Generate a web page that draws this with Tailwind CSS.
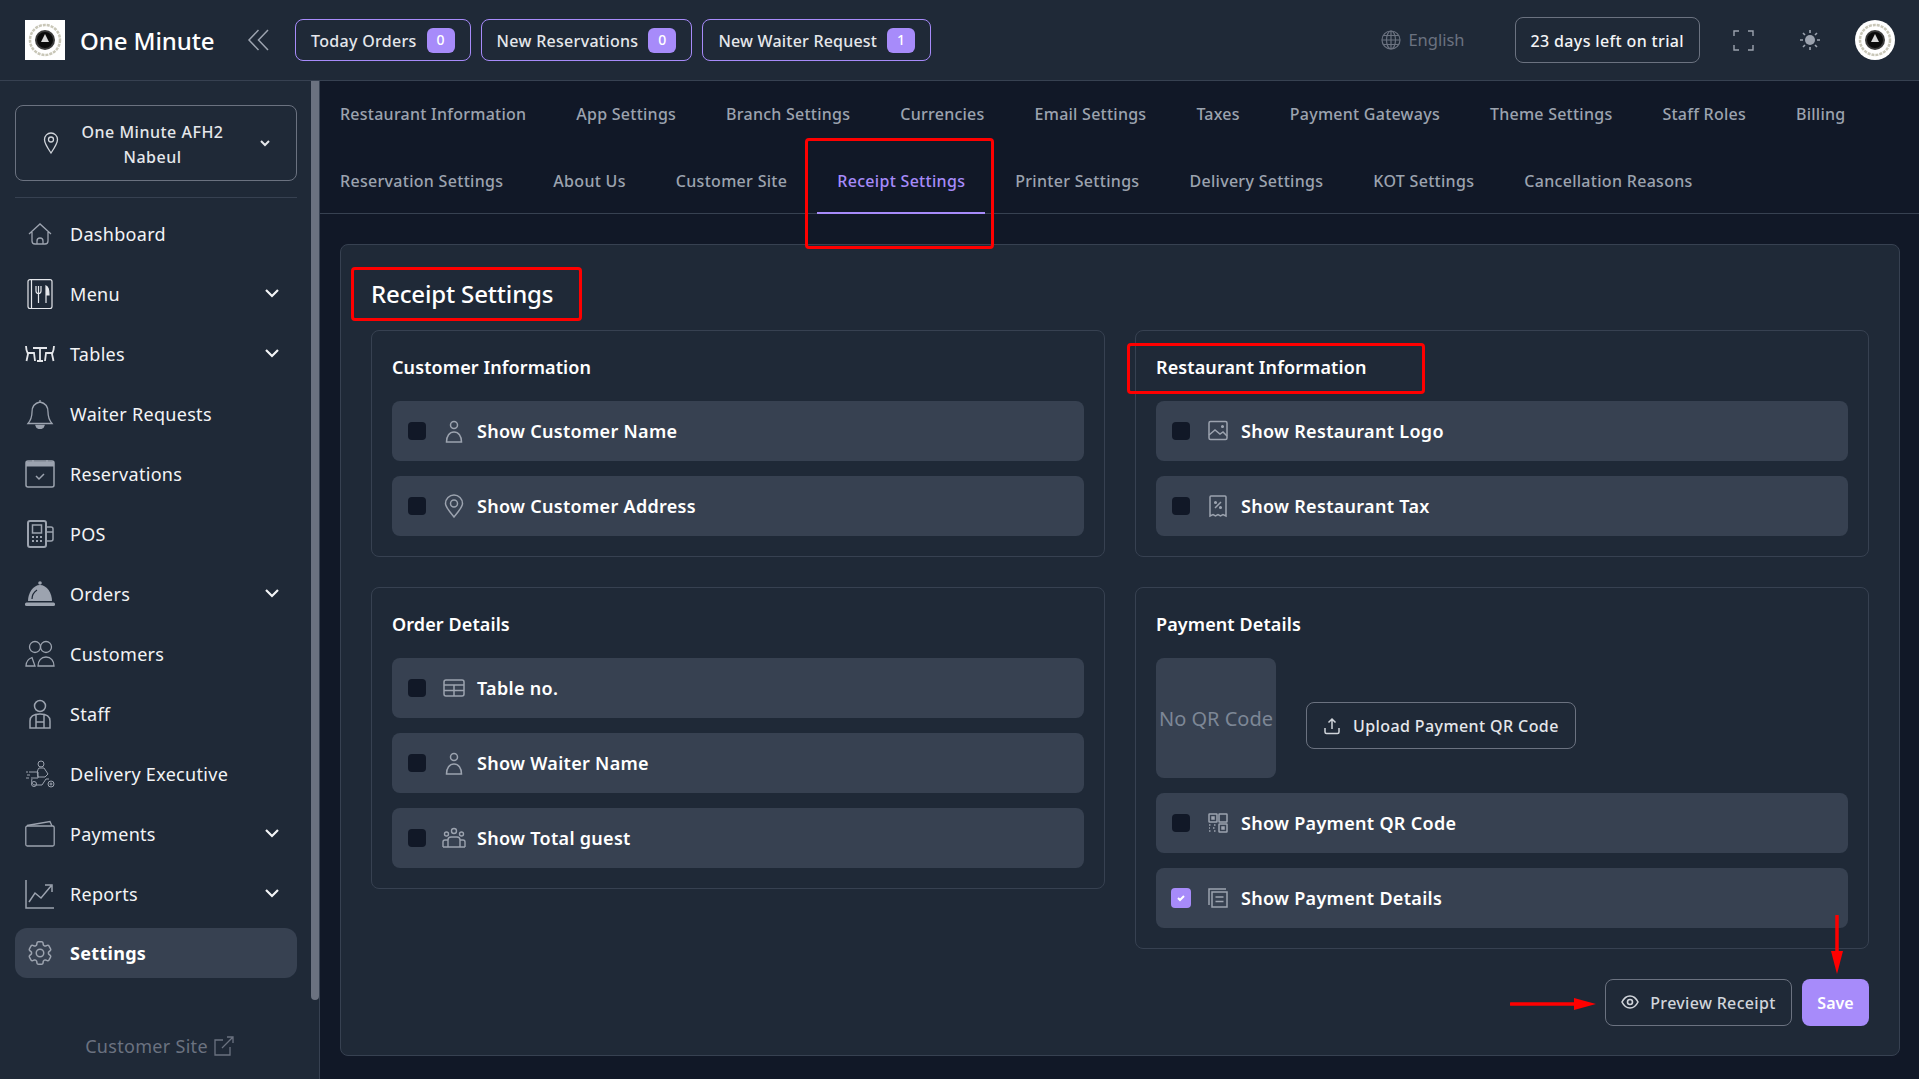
<!DOCTYPE html>
<html lang="en">
<head>
    <meta charset="UTF-8">
    <title>Receipt Settings - One Minute</title>
    <script src="https://cdn.jsdelivr.net/npm/@tailwindcss/browser@4"></script>
</head>
<body class="bg-[#111827] h-[1079px] overflow-hidden font-['Noto_Sans',sans-serif] text-white relative">

    <!-- Header -->
    <header class="h-[81px] bg-[#1f2937] border-b border-[#374151] flex items-center pl-[25px] pr-6">
        <svg class="w-10 h-10 shrink-0" viewBox="0 0 40 40"><rect width="40" height="40" fill="#fff"/><circle cx="20" cy="20" r="15" fill="none" stroke="#c9c7b8" stroke-width="2.500" stroke-dasharray="3 1"/><circle cx="20" cy="20" r="10" fill="#3b3b3b"/><circle cx="20" cy="20" r="8" fill="#0b0b0b"/><path d="M20 14l4 8h-8Z" fill="#d8d8d8"/></svg>
        <span class="ml-[15px] mt-0.5 text-2xl font-medium w-[134px] whitespace-nowrap tracking-[-0.1px]">One Minute</span>
        <svg class="ml-[33px] w-[24px] h-[24px] text-[#9ca3af]" fill="none" stroke="currentColor" stroke-width="1.5" viewBox="0 0 24 24"><path d="M11.5 2 2 12l9.5 10M21 2l-9.5 10L21 22"/></svg>
        <div class="ml-[24px] flex gap-2.5">
            <div class="h-[42px] pt-0.5 px-[15px] flex items-center gap-[10px] rounded-lg border border-[#a78bfa] text-[#e5e7eb] font-medium tracking-[0.3px]">Today Orders <span class="-mt-0.5 w-7 h-[25px] rounded-md bg-[#a78bfa] text-white text-sm flex items-center justify-center">0</span></div>
            <div class="h-[42px] pt-0.5 px-[15px] flex items-center gap-[10px] rounded-lg border border-[#a78bfa] text-[#e5e7eb] font-medium tracking-[0.3px]">New Reservations <span class="-mt-0.5 w-7 h-[25px] rounded-md bg-[#a78bfa] text-white text-sm flex items-center justify-center">0</span></div>
            <div class="h-[42px] pt-0.5 px-[15px] flex items-center gap-[10px] rounded-lg border border-[#a78bfa] text-[#e5e7eb] font-medium tracking-[0.2px]">New Waiter Request <span class="-mt-0.5 w-7 h-[25px] rounded-md bg-[#a78bfa] text-white text-sm flex items-center justify-center">1</span></div>
        </div>
        <div class="flex-1"></div>
        <svg class="w-5 h-5 text-[#6b7280]" fill="none" stroke="currentColor" stroke-width="1.2" viewBox="0 0 20 20"><circle cx="10" cy="10" r="9"/><ellipse cx="10" cy="10" rx="4.5" ry="9"/><path d="M10 1v18M1 10h18M2.2 5.5h15.6M2.2 14.5h15.6"/></svg>
        <span class="ml-[7px] text-[16.500px] text-[#6b7280]">English</span>
        <div class="ml-[50px] h-[46px] pt-0.5 px-[15px] flex items-center rounded-lg border border-[#6b7280] text-[#f3f4f6] font-medium tracking-[0.35px]">23 days left on trial</div>
        <svg class="ml-[33px] w-[21px] h-[21px] text-[#9ca3af]" fill="none" stroke="currentColor" stroke-width="1.4" viewBox="0 0 21 21"><path d="M1 6V1h5M15 1h5v5M20 15v5h-5M6 20H1v-5"/></svg>
        <svg class="ml-[45px] w-[22px] h-[22px] text-[#9ca3af]" fill="currentColor" viewBox="0 0 22 22"><circle cx="11" cy="11" r="5"/><path d="M11 1v3M11 18v3M1 11h3M18 11h3M4 4l2 2M16 16l2 2M18 4l-2 2M6 16l-2 2" stroke="currentColor" stroke-width="1.6"/></svg>
        <svg class="ml-[34px] w-10 h-10" viewBox="0 0 40 40"><circle cx="20" cy="20" r="20" fill="#fff"/><circle cx="20" cy="20" r="15" fill="none" stroke="#c9c7b8" stroke-width="2.500" stroke-dasharray="3 1"/><circle cx="20" cy="20" r="10" fill="#3b3b3b"/><circle cx="20" cy="20" r="8" fill="#0b0b0b"/><path d="M20 14l4 8h-8Z" fill="#d8d8d8"/></svg>
    </header>

    <div class="flex h-[998px]">
        <!-- Sidebar -->
        <aside class="w-[320px] shrink-0 bg-[#1f2937] border-r border-[#374151] relative flex flex-col pt-6">
            <div class="absolute right-0 top-0 w-2 h-[919px] rounded-b bg-[#6b7280]"></div>
            <div class="mx-[15px] w-[282px] h-[76px] rounded-lg border border-[#6b7280] flex items-center pl-[26px] pr-[25px]">
                <svg class="w-[18px] h-6 text-[#d1d5db] shrink-0" fill="none" stroke="currentColor" stroke-width="1.3" viewBox="0 0 18 24"><path d="M9 22C5 16 2.5 12.5 2.5 8.5a6.5 6.5 0 0 1 13 0C15.500 12.500 13 16 9 22Z"/><circle cx="9" cy="8.500" r="2.500"/></svg>
                <div class="flex-1 mr-[14px] pt-[3px] text-center font-medium text-[#e5e7eb] leading-[25px] tracking-[0.5px]">One Minute AFH2<br>Nabeul</div>
                <svg class="w-3 h-3 text-[#e5e7eb] shrink-0" fill="none" stroke="currentColor" stroke-width="2" viewBox="0 0 12 12"><path d="m2 4 4 4 4-4"/></svg>
            </div>
            <div class="mx-[15px] w-[282px] mt-4 mb-[11px] border-t border-[#374151]"></div>
            <nav class="px-[15px] flex flex-col gap-[10px] w-[312px] text-lg text-[#f3f4f6] tracking-[0.3px]">
                <a class="h-[50px] w-[282px] px-[10px] flex items-center gap-[15px]">
                    <svg class="w-[30px] h-[30px] text-[#9ca3af] shrink-0" fill="none" stroke="currentColor" stroke-width="1.3" viewBox="0 0 30 30"><path d="M4 15 15 5l11 10M7 13v9a3 3 0 0 0 3 3h10a3 3 0 0 0 3-3v-9M12 25v-3a3 3 0 0 1 6 0v3"/></svg>
                    Dashboard
                </a>
                <a class="h-[50px] w-[282px] px-[10px] flex items-center gap-[15px]">
                    <svg class="w-[30px] h-[30px] text-[#e5e7eb] shrink-0" fill="none" stroke="currentColor" stroke-width="1.2" viewBox="0 0 30 30"><rect x="3" y="0.600" width="24" height="29" rx="2"/><path d="M6.500 1v28M11 7v5a2.500 2.500 0 0 0 5 0V7M13.500 7v17" /><path d="M21 24V7c2.500 1 3 4 3 9h-3" fill="currentColor"/></svg>
                    Menu
                    <svg class="ml-auto mr-[7px] -mt-0.5 w-4 h-4 text-[#f3f4f6]" fill="none" stroke="currentColor" stroke-width="2.200" viewBox="0 0 16 16"><path d="m2 5 6 6 6-6"/></svg>
                </a>
                <a class="h-[50px] w-[282px] px-[10px] flex items-center gap-[15px]">
                    <svg class="w-[30px] h-[30px] text-[#e5e7eb] shrink-0" fill="none" stroke="currentColor" stroke-width="1.800" viewBox="0 0 30 30"><path d="M1 7c0 4 1 6 2 8l-1.500 7M3 14h6l1 8M29 7c0 4-1 6-2 8l1.500 7M27 14h-6l-1 8M8 9h14M15 9v13M12 22h6"/></svg>
                    Tables
                    <svg class="ml-auto mr-[7px] -mt-0.5 w-4 h-4 text-[#f3f4f6]" fill="none" stroke="currentColor" stroke-width="2.200" viewBox="0 0 16 16"><path d="m2 5 6 6 6-6"/></svg>
                </a>
                <a class="h-[50px] w-[282px] px-[10px] flex items-center gap-[15px]">
                    <svg class="w-[30px] h-[30px] text-[#9ca3af] shrink-0" fill="none" stroke="currentColor" stroke-width="1.300" viewBox="0 0 30 30"><path d="M15 3c-5 1-8 4-8 10 0 5-1 8-4 11.500h24C24 21 23 18 23 13c0-6-3-9-8-10ZM15 1v2"/><path d="M11 26.500h8c-.5 2-2 3-4 3s-3.500-1-4-3Z" fill="currentColor"/></svg>
                    Waiter Requests
                </a>
                <a class="h-[50px] w-[282px] px-[10px] flex items-center gap-[15px]">
                    <svg class="w-[30px] h-[30px] text-[#9ca3af] shrink-0" fill="none" stroke="currentColor" stroke-width="1.500" viewBox="0 0 30 30"><rect x="1" y="2" width="28" height="26" rx="2"/><path d="M1 5h28" stroke-width="5"/><path d="M8 1v2M22 1v2M11 17l3 3 5-5"/></svg>
                    Reservations
                </a>
                <a class="h-[50px] w-[282px] px-[10px] flex items-center gap-[15px]">
                    <svg class="w-[30px] h-[30px] text-[#9ca3af] shrink-0" fill="none" stroke="currentColor" stroke-width="1.500" viewBox="0 0 30 30"><rect x="3" y="2" width="18" height="26" rx="2" stroke-width="2"/><rect x="7.500" y="6" width="9" height="8"/><path d="M7 18h2M11 18h2M15 18h2M7 22h2M11 22h2M15 22h2" stroke-width="2"/><path d="M21 8h5a2 2 0 0 1 2 2v10a2 2 0 0 1-2 2h-5M21 13h7"/></svg>
                    POS
                </a>
                <a class="h-[50px] w-[282px] px-[10px] flex items-center gap-[15px]">
                    <svg class="w-[30px] h-[30px] text-[#9ca3af] shrink-0" fill="currentColor" viewBox="0 0 30 30"><circle cx="15" cy="4" r="1.800"/><path d="M3 22C3 14 8 6 15 6s12 8 12 16Z"/><rect y="23.500" width="30" height="3.500" rx="1.500"/><path d="M7 20c0-4 2-7 5-9" fill="none" stroke="#1f2937" stroke-width="1.200"/></svg>
                    Orders
                    <svg class="ml-auto mr-[7px] -mt-0.5 w-4 h-4 text-[#f3f4f6]" fill="none" stroke="currentColor" stroke-width="2.200" viewBox="0 0 16 16"><path d="m2 5 6 6 6-6"/></svg>
                </a>
                <a class="h-[50px] w-[282px] px-[10px] flex items-center gap-[15px]">
                    <svg class="w-[30px] h-[30px] text-[#9ca3af] shrink-0" fill="none" stroke="currentColor" stroke-width="1.300" viewBox="0 0 30 30"><circle cx="10" cy="8" r="5.500"/><circle cx="21" cy="8" r="5.500"/><path d="M1 27c0-4 2-7 6-8.500L10 27ZM13 27c0-5 3-9 8-9s8 4 8 9Z"/></svg>
                    Customers
                </a>
                <a class="h-[50px] w-[282px] px-[10px] flex items-center gap-[15px]">
                    <svg class="w-[30px] h-[30px] text-[#9ca3af] shrink-0" fill="none" stroke="currentColor" stroke-width="1.500" viewBox="0 0 30 30"><circle cx="15" cy="7" r="5.500"/><path d="M5 29v-7c0-5 4-7 10-7s10 2 10 7v7ZM11 15v14M19 15v14M11 23h8"/></svg>
                    Staff
                </a>
                <a class="h-[50px] w-[282px] px-[10px] flex items-center gap-[15px]">
                    <svg class="w-[30px] h-[30px] text-[#9ca3af] shrink-0" fill="none" stroke="currentColor" stroke-width="1" viewBox="0 0 30 30"><circle cx="16" cy="5" r="3"/><path d="M14 9c-2 2-2 6-1 9h7l3-3-4-6ZM4 13h9v6H6M1 13h2M2 16h3M1 19h3M7 20c-1 3 0 6 3 6h7l4-6 3 0"/><circle cx="9" cy="25" r="2.500"/><circle cx="26" cy="25" r="3"/><circle cx="26" cy="25" r="1"/></svg>
                    Delivery Executive
                </a>
                <a class="h-[50px] w-[282px] px-[10px] flex items-center gap-[15px]">
                    <svg class="w-[30px] h-[30px] text-[#9ca3af] shrink-0" fill="none" stroke="currentColor" stroke-width="1.300" viewBox="0 0 30 30"><rect x="0.800" y="7" width="28.400" height="20" rx="1.500"/><path d="M2 6.500 25 2.500l2 4.500"/></svg>
                    Payments
                    <svg class="ml-auto mr-[7px] -mt-0.5 w-4 h-4 text-[#f3f4f6]" fill="none" stroke="currentColor" stroke-width="2.200" viewBox="0 0 16 16"><path d="m2 5 6 6 6-6"/></svg>
                </a>
                <a class="h-[50px] w-[282px] px-[10px] flex items-center gap-[15px]">
                    <svg class="w-[30px] h-[30px] text-[#9ca3af] shrink-0" fill="none" stroke="currentColor" stroke-width="1.500" viewBox="0 0 30 30"><path d="M1 1v28h28M4 23l6-9 6 5 10-12M20 6h7v7"/></svg>
                    Reports
                    <svg class="ml-auto mr-[7px] -mt-0.5 w-4 h-4 text-[#f3f4f6]" fill="none" stroke="currentColor" stroke-width="2.200" viewBox="0 0 16 16"><path d="m2 5 6 6 6-6"/></svg>
                </a>
                <a class="h-[50px] w-[282px] -mt-[1px] px-[10px] flex items-center gap-[15px] rounded-xl bg-[#374151] font-bold text-white">
                    <svg class="w-[30px] h-[30px] text-[#9ca3af] shrink-0" fill="none" stroke="currentColor" stroke-width="1.200" viewBox="0 0 24 24"><path d="M9.594 3.940c.09-.542.56-.94 1.110-.94h2.593c.55 0 1.020.398 1.110.94l.213 1.281c.063.374.313.686.645.870.074.040.147.083.22.127.325.196.72.257 1.075.124l1.217-.456a1.125 1.125 0 0 1 1.370.49l1.296 2.247a1.125 1.125 0 0 1-.26 1.431l-1.003.827c-.293.241-.438.613-.43.992a7.723 7.723 0 0 1 0 .255c-.008.378.137.75.43.991l1.004.827c.424.35.534.955.26 1.43l-1.298 2.247a1.125 1.125 0 0 1-1.369.491l-1.217-.456c-.355-.133-.75-.072-1.076.124a6.470 6.470 0 0 1-.22.128c-.331.183-.581.495-.644.869l-.213 1.281c-.09.543-.56.94-1.110.94h-2.594c-.55 0-1.019-.398-1.110-.94l-.213-1.281c-.062-.374-.312-.686-.644-.87a6.520 6.520 0 0 1-.22-.127c-.325-.196-.72-.257-1.076-.124l-1.217.456a1.125 1.125 0 0 1-1.369-.49l-1.297-2.247a1.125 1.125 0 0 1 .26-1.431l1.004-.827c.292-.24.437-.613.43-.991a6.932 6.932 0 0 1 0-.255c.007-.38-.138-.751-.43-.992l-1.004-.827a1.125 1.125 0 0 1-.26-1.430l1.297-2.247a1.125 1.125 0 0 1 1.370-.491l1.216.456c.356.133.751.072 1.076-.124.072-.044.146-.086.22-.128.332-.183.582-.495.644-.869l.214-1.280Z"/><circle cx="12" cy="12" r="3"/></svg>
                    Settings
                </a>
            </nav>
            <div class="mt-auto pb-[19px] flex items-center justify-center gap-1.5 text-lg text-[#6b7280] tracking-[0.3px]">
                Customer Site
                <svg class="w-5 h-5" fill="none" stroke="currentColor" stroke-width="1.300" viewBox="0 0 20 20"><path d="M9 4H1v15h15v-8M8 12 19 1M13 1h6v6"/></svg>
            </div>
        </aside>

        <!-- Content -->
        <main class="flex-1 min-w-0">
            <!-- Tabs -->
            <div class="border-b border-[#374151] h-[133px] text-[#9ca3af] font-medium">
                <div class="flex h-[67px] tracking-[0.25px]">
                    <a class="px-5 pt-[21px] mr-2.5 whitespace-nowrap">Restaurant Information</a>
                    <a class="px-5 pt-[21px] mr-2.5 whitespace-nowrap">App Settings</a>
                    <a class="px-5 pt-[21px] mr-2.5 whitespace-nowrap">Branch Settings</a>
                    <a class="px-5 pt-[21px] mr-2.5 whitespace-nowrap">Currencies</a>
                    <a class="px-5 pt-[21px] mr-2.5 whitespace-nowrap">Email Settings</a>
                    <a class="px-5 pt-[21px] mr-2.5 whitespace-nowrap">Taxes</a>
                    <a class="px-5 pt-[21px] mr-2.5 whitespace-nowrap">Payment Gateways</a>
                    <a class="px-5 pt-[21px] mr-2.5 whitespace-nowrap">Theme Settings</a>
                    <a class="px-5 pt-[21px] mr-2.5 whitespace-nowrap">Staff Roles</a>
                    <a class="px-5 pt-[21px] mr-2.5 whitespace-nowrap">Billing</a>
                </div>
                <div class="flex h-[66px] tracking-[0.3px]">
                    <a class="px-5 pt-[21px] mr-2.5 whitespace-nowrap">Reservation Settings</a>
                    <a class="px-5 pt-[21px] mr-2.5 whitespace-nowrap">About Us</a>
                    <a class="px-5 pt-[21px] mr-2.5 whitespace-nowrap">Customer Site</a>
                    <a class="px-5 pt-[21px] mr-2.5 whitespace-nowrap h-[66px] border-b-2 border-[#a78bfa] text-[#a78bfa]">Receipt Settings</a>
                    <a class="px-5 pt-[21px] mr-2.5 whitespace-nowrap">Printer Settings</a>
                    <a class="px-5 pt-[21px] mr-2.5 whitespace-nowrap">Delivery Settings</a>
                    <a class="px-5 pt-[21px] mr-2.5 whitespace-nowrap">KOT Settings</a>
                    <a class="px-5 pt-[21px] mr-2.5 whitespace-nowrap">Cancellation Reasons</a>
                </div>
            </div>

            <!-- Card -->
            <section class="ml-[20px] mr-[19px] mt-[30px] h-[812px] rounded-lg border border-[#374151] bg-[#1f2937] px-[30px] pt-[33px]">
                <h2 class="text-2xl font-medium leading-8 mb-5 tracking-[-0.15px]">Receipt Settings</h2>
                <div class="grid grid-cols-2 gap-x-[30px] gap-y-[30px] items-start">
                    <!-- Customer Information -->
                    <div class="rounded-lg border border-[#374151] px-5 pt-[22px] pb-5">
                        <h3 class="text-lg font-semibold leading-7 mb-5 tracking-[0.1px]">Customer Information</h3>
                        <div class="flex flex-col gap-[15px]">
                            <label class="h-[60px] rounded-lg bg-[#374151] flex items-center pl-4 text-lg font-semibold tracking-[0.3px]">
                                <span class="w-[18px] h-[18px] rounded bg-[#111827]"></span>
                                <svg class="ml-4 w-6 h-6 text-[#9ca3af]" fill="none" stroke="currentColor" stroke-width="1.500" viewBox="0 0 24 24"><circle cx="12" cy="6" r="3.500"/><path d="M4.500 23c0-6 3-10 7.500-10s7.500 4 7.500 10Z"/></svg>
                                <span class="ml-[11px]">Show Customer Name</span>
                            </label>
                            <label class="h-[60px] rounded-lg bg-[#374151] flex items-center pl-4 text-lg font-semibold tracking-[0.3px]">
                                <span class="w-[18px] h-[18px] rounded bg-[#111827]"></span>
                                <svg class="ml-4 w-6 h-6 text-[#9ca3af]" fill="none" stroke="currentColor" stroke-width="1.500" viewBox="0 0 24 24"><path d="M12 23C7 17 3.500 13 3.500 9.500a8.500 8.500 0 0 1 17 0C20.500 13 17 17 12 23Z"/><circle cx="12" cy="9.500" r="3.500"/></svg>
                                <span class="ml-[11px]">Show Customer Address</span>
                            </label>
                        </div>
                    </div>
                    <!-- Restaurant Information -->
                    <div class="rounded-lg border border-[#374151] px-5 pt-[22px] pb-5">
                        <h3 class="text-lg font-semibold leading-7 mb-5 tracking-[0.1px]">Restaurant Information</h3>
                        <div class="flex flex-col gap-[15px]">
                            <label class="h-[60px] rounded-lg bg-[#374151] flex items-center pl-4 text-lg font-semibold tracking-[0.3px]">
                                <span class="w-[18px] h-[18px] rounded bg-[#111827]"></span>
                                <svg class="ml-4 w-6 h-6 text-[#9ca3af]" fill="none" stroke="currentColor" stroke-width="1.500" viewBox="0 0 24 24"><rect x="3" y="2.500" width="18" height="18" rx="1.500"/><path d="M3 16l6-5 5 4 3-2 4 4"/><circle cx="16.500" cy="7.500" r=".8" fill="currentColor"/></svg>
                                <span class="ml-[11px]">Show Restaurant Logo</span>
                            </label>
                            <label class="h-[60px] rounded-lg bg-[#374151] flex items-center pl-4 text-lg font-semibold tracking-[0.3px]">
                                <span class="w-[18px] h-[18px] rounded bg-[#111827]"></span>
                                <svg class="ml-4 w-6 h-6 text-[#9ca3af]" fill="none" stroke="currentColor" stroke-width="1.500" viewBox="0 0 24 24"><path d="M4 22V3a1 1 0 0 1 1-1h14a1 1 0 0 1 1 1v19l-3-1.500-2.500 1.500-2.500-1.500L9.500 22 7 20.500ZM9 14l6-6"/><circle cx="9.500" cy="8.500" r=".8" fill="currentColor"/><circle cx="14.500" cy="13.500" r=".8" fill="currentColor"/></svg>
                                <span class="ml-[11px]">Show Restaurant Tax</span>
                            </label>
                        </div>
                    </div>
                    <!-- Order Details -->
                    <div class="rounded-lg border border-[#374151] px-5 pt-[22px] pb-5">
                        <h3 class="text-lg font-semibold leading-7 mb-5 tracking-[0.1px]">Order Details</h3>
                        <div class="flex flex-col gap-[15px]">
                            <label class="h-[60px] rounded-lg bg-[#374151] flex items-center pl-4 text-lg font-semibold tracking-[0.3px]">
                                <span class="w-[18px] h-[18px] rounded bg-[#111827]"></span>
                                <svg class="ml-4 w-6 h-6 text-[#9ca3af]" fill="none" stroke="currentColor" stroke-width="1.500" viewBox="0 0 24 24"><rect x="2" y="4" width="20" height="16" rx="2"/><path d="M2 9h20M2 14.500h20M12 9v11" /></svg>
                                <span class="ml-[11px]">Table no.</span>
                            </label>
                            <label class="h-[60px] rounded-lg bg-[#374151] flex items-center pl-4 text-lg font-semibold tracking-[0.3px]">
                                <span class="w-[18px] h-[18px] rounded bg-[#111827]"></span>
                                <svg class="ml-4 w-6 h-6 text-[#9ca3af]" fill="none" stroke="currentColor" stroke-width="1.500" viewBox="0 0 24 24"><circle cx="12" cy="6" r="3.500"/><path d="M4.500 23c0-6 3-10 7.500-10s7.500 4 7.500 10Z"/></svg>
                                <span class="ml-[11px]">Show Waiter Name</span>
                            </label>
                            <label class="h-[60px] rounded-lg bg-[#374151] flex items-center pl-4 text-lg font-semibold tracking-[0.3px]">
                                <span class="w-[18px] h-[18px] rounded bg-[#111827]"></span>
                                <svg class="ml-4 w-6 h-6 text-[#9ca3af]" fill="none" stroke="currentColor" stroke-width="1.400" viewBox="0 0 24 24"><circle cx="12" cy="5" r="2.500"/><circle cx="4.500" cy="8" r="2"/><circle cx="19.500" cy="8" r="2"/><path d="M1 21v-5a2 2 0 0 1 2-2h3M23 21v-5a2 2 0 0 0-2-2h-3M6 21v-7a3 3 0 0 1 3-3h6a3 3 0 0 1 3 3v7M1 21h22"/></svg>
                                <span class="ml-[11px]">Show Total guest</span>
                            </label>
                        </div>
                    </div>
                    <!-- Payment Details -->
                    <div class="rounded-lg border border-[#374151] px-5 pt-[22px] pb-5">
                        <h3 class="text-lg font-semibold leading-7 mb-5 tracking-[0.1px]">Payment Details</h3>
                        <div class="flex flex-col gap-[15px]">
                            <div class="flex items-center">
                                <div class="w-[120px] h-[120px] pt-0.5 rounded-lg bg-[#374151] flex items-center justify-center text-xl text-[#7d8796] whitespace-nowrap">No QR Code</div>
                                <button class="ml-[30px] mt-[15px] h-[47px] px-[16px] rounded-lg border border-[#6b7280] flex items-center gap-[12px] font-medium text-[#e5e7eb] whitespace-nowrap tracking-[0.4px]">
                                    <svg class="w-[18px] h-[18px] text-[#d1d5db]" fill="none" stroke="currentColor" stroke-width="1.500" viewBox="0 0 18 18"><path d="M9 12V2M5.500 5.500 9 2l3.500 3.500M2 11v4a1.500 1.500 0 0 0 1.500 1.500h11A1.500 1.500 0 0 0 16 15v-4" /></svg>
                                    Upload Payment QR Code
                                </button>
                            </div>
                            <label class="h-[60px] rounded-lg bg-[#374151] flex items-center pl-4 text-lg font-semibold tracking-[0.3px]">
                                <span class="w-[18px] h-[18px] rounded bg-[#111827]"></span>
                                <svg class="ml-4 w-6 h-6 text-[#9ca3af]" fill="none" stroke="currentColor" stroke-width="1.500" viewBox="0 0 24 24"><rect x="3" y="3" width="8" height="8" rx=".5"/><rect x="13" y="3" width="8" height="8" rx=".5"/><rect x="13" y="13" width="8" height="8" rx=".5"/><path d="M3 14h2M8 14h2M3 17h1M7 17h2M3 20h2M8 20h2" stroke-dasharray="1.500 1"/><rect x="6" y="6" width="2" height="2" fill="currentColor"/><rect x="16" y="16" width="2" height="2" fill="currentColor"/></svg>
                                <span class="ml-[11px]">Show Payment QR Code</span>
                            </label>
                            <label class="h-[60px] rounded-lg bg-[#374151] flex items-center pl-[15px] text-lg font-semibold tracking-[0.3px]">
                                <span class="w-5 h-5 rounded bg-[#a78bfa] flex items-center justify-center">
                                    <svg class="w-3 h-3 text-white" fill="none" stroke="currentColor" stroke-width="2" viewBox="0 0 12 12"><path d="m3 6 2 2 4-4"/></svg>
                                </span>
                                <svg class="ml-[15px] w-6 h-6 text-[#9ca3af]" fill="none" stroke="currentColor" stroke-width="1.500" viewBox="0 0 24 24"><path d="M3 19V3h17"/><rect x="6" y="6" width="15" height="15"/><path d="M9.500 11h8M9.500 15.500h8"/></svg>
                                <span class="ml-[11px]">Show Payment Details</span>
                            </label>
                        </div>
                    </div>
                </div>
                <div class="mt-[30px] flex justify-end gap-2.5">
                    <button class="h-[47px] w-[187px] rounded-lg border border-[#6b7280] flex items-center justify-center gap-[11px] font-medium text-[#d1d5db] whitespace-nowrap tracking-[0.33px]">
                        <svg class="w-[18px] h-[18px] -mt-0.5" fill="none" stroke="currentColor" stroke-width="1.600" viewBox="0 0 18 18"><path d="M1 9c2-4 5-6 8-6s6 2 8 6c-2 4-5 6-8 6s-6-2-8-6Z"/><circle cx="9" cy="9" r="2.500"/></svg>
                        Preview Receipt
                    </button>
                    <button class="h-[47px] w-[67px] rounded-lg bg-[#a78bfa] font-semibold text-white">Save</button>
                </div>
            </section>
        </main>
    </div>

    <!-- Red annotations drawn on top of the screenshot -->
    <div class="absolute left-[805px] top-[138px] w-[189px] h-[111px] border-[3px] border-[#ff0000] rounded-sm pointer-events-none"></div>
    <div class="absolute left-[351px] top-[267px] w-[231px] h-[54px] border-[3px] border-[#ff0000] rounded-sm pointer-events-none"></div>
    <div class="absolute left-[1127px] top-[343px] w-[298px] h-[51px] border-[3px] border-[#ff0000] rounded-sm pointer-events-none"></div>
    <svg class="absolute left-[1510px] top-[994px] w-[86px] h-5 pointer-events-none" viewBox="0 0 86 20"><path d="M1 10h66" stroke="#ff0000" stroke-width="3.500" stroke-linecap="round"/><path d="M64 4l22 6-22 6Z" fill="#ff0000"/></svg>
    <svg class="absolute left-[1827px] top-[915px] w-5 h-[59px] pointer-events-none" viewBox="0 0 20 59"><path d="M10 1v38" stroke="#ff0000" stroke-width="3.500" stroke-linecap="round"/><path d="M4 36l6 23 6-23Z" fill="#ff0000"/></svg>
</body>
</html>
